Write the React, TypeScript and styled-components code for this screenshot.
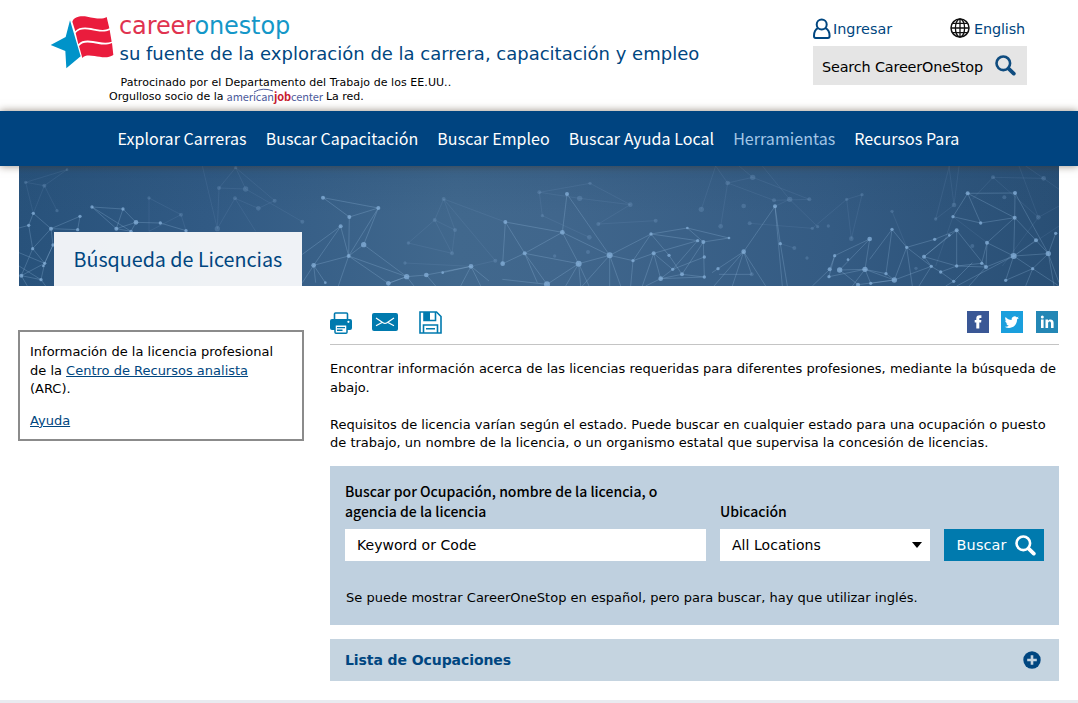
import React from 'react';
import styled, { createGlobalStyle } from 'styled-components';

const verdana = `Verdana, "DejaVu Sans", sans-serif`;
const sourceSans = `"Source Sans Pro", "Noto Sans CJK SC", sans-serif`;

const GlobalStyle = createGlobalStyle`
  * { box-sizing: border-box; }
  body { margin: 0; background: #fff; color: #000; font-family: ${verdana}; overflow: hidden; }
  p { margin: 0; }
`;

const Page = styled.div`height: 703px; overflow: hidden; display: flex; flex-direction: column;`;

const Header = styled.header`
  height: 111px; display: flex; justify-content: space-between; padding: 14px 51px 0 50px;
  flex: none;
`;
const BrandRow = styled.div`display: flex; gap: 5px; height: 60px;`;
const BrandText = styled.div`display: flex; flex-direction: column; white-space: nowrap;`;
const Wordmark = styled.div`
  font-size: 24px; line-height: 24px; color: #1497c8; letter-spacing: -.12px; margin-left: -1px;
  em { font-style: normal; color: #e0334f; }
`;
const Tagline = styled.div`font-size: 18px; line-height: 31px; color: #004680; margin-left: -.5px;`;
const Sponsor = styled.div`
  font-size: 11px; line-height: 15px; padding-left: 59px; white-space: nowrap;
`;
const SponsorLine = styled.div<{ $first?: boolean }>`
  display: flex; gap: 3px;
  ${p => p.$first && 'padding: 1px 0 0 11.5px; height: 15px; letter-spacing: .06px;'}
`;
const JobCenter = styled.span`
  position: relative; font-family: ${sourceSans}; font-size: 11px; color: #4d5b9c; letter-spacing: -.1px;
  b { color: #c8202f; }
  svg { position: absolute; left: 26px; top: -1px; }
`;
const Tools = styled.div`width: 214px; margin-top: 4px;`;
const ToolLinks = styled.div`display: flex; justify-content: space-between; height: 28px; padding-right: 2px;`;
const ToolLink = styled.a<{ $gap: number; $spacing?: number }>`
  display: flex; gap: ${p => p.$gap}px; font-size: 14.4px; line-height: 22px; color: #004680;
  letter-spacing: ${p => p.$spacing ?? 0}px;
`;
const SiteSearch = styled.div`
  height: 39px; background: #e5e5e5; display: flex; align-items: center; justify-content: space-between;
  padding: 0 11px 0 9px; font-size: 14.4px; letter-spacing: -.16px; white-space: nowrap;
  span { padding-top: 2px; }
`;

const Nav = styled.nav`
  height: 55px; flex: none; background: #004480; display: flex; gap: 19px; padding-left: 117.5px; position: relative; z-index: 1;
  box-shadow: 0 0 8px rgba(60, 40, 20, .55);
`;
const NavLink = styled.a<{ $muted?: boolean }>`
  font-family: ${sourceSans}; font-size: 16px; line-height: 55px; letter-spacing: .055px; white-space: nowrap;
  color: ${p => (p.$muted ? '#a3c6e6' : '#fff')};
`;

const Banner = styled.div`
  height: 120px; flex: none; margin: 0 19px; display: grid; align-items: end; padding-left: 35px; position: relative;
  background: linear-gradient(180deg, rgba(38,78,116,.25), rgba(38,78,116,0) 40%),
    linear-gradient(90deg, #28527b 0%, #315a84 18%, #41688d 42%, #40668c 52%, #345b83 78%, #294f75 100%);
`;
const Network = styled.svg`position: absolute; inset: 0; width: 1040px; height: 120px;`;
const PageTitle = styled.h1`
  position: relative; margin: 0; width: 248px; height: 54px; background: rgba(255,255,255,.92); color: #004680;
  font-family: ${sourceSans}; font-weight: 400; font-size: 19.7px; line-height: 54px; padding-left: 19.5px; white-space: nowrap;
`;

const Columns = styled.div`display: flex; align-items: flex-start; padding: 0 19px 0 18px;`;
const Aside = styled.aside`
  width: 286px; height: 111px; margin: 44px 26px 0 0; border: 2px solid #8b8b8b; padding: 11px 10px;
  font-size: 13px; line-height: 18.5px; white-space: nowrap;
  p + p { margin-top: 13px; }
  a { color: #004680; text-decoration: underline; }
`;
const Main = styled.main`width: 729px; font-size: 13px; line-height: 18.4px; white-space: nowrap;`;
const ActionBar = styled.div`
  height: 59px; border-bottom: 1px solid #c4c4c4; display: flex; align-items: center; padding-top: 14px;
`;
const Actions = styled.div`
  display: flex; align-items: center; gap: 20px; flex: 1;
  svg:first-child { margin-top: 2px; }
  svg:last-child { margin-left: 1px; }
`;
const Social = styled.div`
  display: flex; gap: 13px; padding-right: 1px;
  svg:first-child { margin-right: -1px; }
`;
const Paragraph = styled.p`
  margin-top: 14px; line-height: 19px;
  & + & { margin-top: 19px; line-height: 18px; }
`;
const SearchPanel = styled.section`margin-top: 14px; height: 159px; background: #bfd0df; padding: 15px;`;
const Fields = styled.div`display: flex; gap: 14px; align-items: flex-end;`;
const Field = styled.div<{ $width: number }>`width: ${p => p.$width}px;`;
const Label = styled.div`font-family: ${sourceSans}; font-weight: 500; font-size: 14px; line-height: 20px; padding-bottom: 8px;`;
const Input = styled.div`
  height: 32px; background: #fff; padding: 0 8px 0 12px; display: flex; align-items: center; justify-content: space-between;
  font-size: 14px; letter-spacing: .04px;
`;
const SearchButton = styled.button`
  width: 100px; height: 32px; border: 0; background: #007aae; color: #fff; font-family: ${verdana}; font-size: 14.4px;
  display: flex; align-items: center; justify-content: space-between; padding: 0 8px 0 12.6px; letter-spacing: .15px;
`;
const Note = styled.p`margin-top: 28px; padding-left: 1px; letter-spacing: .015px;`;
const Accordion = styled.section`
  margin-top: 14px; height: 42px; background: #c5d4e0; display: flex; align-items: center; justify-content: space-between;
  padding: 0 18px 0 15px; color: #004680; font-size: 14px; font-weight: 700; letter-spacing: -.08px;
`;
const FooterEdge = styled.div`height: 3px; margin-top: auto; background: #e9ebf0; flex: none;`;

const nodes: [number, number, number][] = [
  [43,142,5],[29,178,5],[96,188,6],[183,151,5],[176,191,5],[102,237,5],[77,292,5],[73,300,4],[41,248,5],[7,329,6],[66,341,5],
  [219,123,5],[312,129,5],[351,169,7],[292,188,6],[424,171,5],[501,194,5],[336,196,5],
  [912,95,6],[991,153,6],[965,181,6],[1034,236,8],[989,270,6],[884,298,7],[919,350,4],[1078,126,6],[1163,332,8],[1108,352,7],
  [1222,327,7],[1356,301,7],[1271,320,4],[1451,293,7],[1459,168,6],[1517,262,6],[1630,199,7],[1644,84,6],[1679,293,9],[1772,268,9],
  [1584,355,9],[1842,284,5],[1896,204,5],[1904,262,6],[1950,268,5],[2005,186,4],[2036,224,5],[2053,228,6],[2056,273,5],[2056,333,5],
  [1925,338,7],[1989,325,6],[1961,310,5],[2130,216,4],[2097,308,5],[2174,257,7],[2268,121,6],[2284,233,5],[2447,269,5],[2487,281,4],
  [2432,310,6],[2462,312,8],[2430,332,5],[2538,310,8],[2552,219,7],[2619,190,5],[2663,244,5],[2626,342,8],[2601,323,5],[2517,356,6],
  [2555,352,5],[2715,272,6],[2737,301,5],[2747,220,5],[2813,193,6],[2791,208,4],[2813,300,5],[2765,318,5],[2804,346,5],
  [2846,82,6],[2988,81,6],[2802,152,5],[2885,171,5],[2987,155,6],[2904,230,6],[2888,292,5],[2901,303,6],[2984,270,9],[3051,223,6],
  [3088,263,8],[3110,202,5],[3041,308,5],[2960,343,5],
];
const faintNodes: [number, number, number][] = [
  [20,49,5],[76,59,6],[144,11,4],[114,134,5],[390,96,5],[486,146,6],[600,66,6],[680,69,8],[650,5,5],[648,97,6],[767,104,6],[718,127,7],
  [850,167,6],[595,188,8],[1274,99,6],[1247,162,6],[1308,192,6],[1168,231,5],[1299,262,6],[1158,291,5],[1429,284,6],
  [1561,79,6],[1570,149,5],[1682,97,8],[1713,52,5],[1834,116,7],[1738,174,6],[1910,164,6],[1711,214,7],[1707,258,6],[1607,270,5],
  [2047,130,8],[2126,51,7],[2201,34,8],[2105,181,7],[2174,120,7],[2192,172,6],[2265,103,6],[2312,100,8],[2371,100,6],[2380,187,5],
  [2396,182,5],[2428,180,5],[2483,100,5],[2529,86,5],[2497,218,7],[2326,246,6],[2364,276,5],[2198,325,6],[2619,136,5],[2750,159,5],
  [2805,117,7],[2922,34,6],[2956,94,6],[3074,37,7],[3058,154,7],[2691,307,5],[2860,240,6],
];
const lines = [
  'M43 142L29 178M43 142L96 188L183 151L176 191L96 188M96 188L102 237L77 292L7 329M29 178L41 248L77 292L66 341L7 329M73 300L102 237M0 186L29 178M0 260L77 292M7 329L41 248M0 300L66 341L80 360M96 188L41 248M7 329L25 360',
  'M219 123L312 129L351 169L424 171L501 194M219 123L292 188L312 129M292 188L351 169M219 123L336 196L351 169M292 188L336 196',
  'M912 95L991 153L1078 126ZM991 153L989 270L965 181L884 298L850 350M989 270L1034 236L1078 126L989 270L884 298L919 350M850 265L965 181M989 270L1163 332M1034 236L1163 332L1108 352L989 270L958 360M884 298L890 350M1163 332L1185 360M1108 352L1163 332L1222 327L1356 301M1271 320L1356 301L1385 360M1356 301L1325 360M1356 301L1410 345M1222 327L1250 360',
  'M1451 293L1459 168L1517 262ZM1459 168L1630 199L1517 262L1679 293L1630 199L1644 84L1772 268L1630 199M1679 293L1584 355L1450 340M1584 355L1517 262L1555 350M1679 293L1772 268L1772 360M1679 293L1640 360M1679 293L1685 360M1679 293L1710 360M1772 268L1690 360M1772 268L1805 360M1772 268L1896 204',
  'M1842 284L1896 204L2036 224L1904 262L1842 284L1772 268M1896 204L2005 186L2053 228L2056 333L1925 338L1961 310L2056 273M1904 262L1961 310L2036 224M1904 262L1870 360M1904 262L1925 338M1842 284L1835 360M1896 204L1950 268L1989 325M1925 338L1880 360M1925 338L1989 325L2056 333M2005 186L2130 216M2053 228L2130 216M2053 228L1989 325',
  'M2174 257L2268 121L2284 233L2305 360M2174 257L2079 320M2174 257L2085 360M2174 257L2198 325M2174 257L2240 360M2174 257L2140 360M2268 121L2290 360M2100 325L2198 325',
  'M2447 269L2552 219L2538 310L2601 323L2626 342L2737 301M2447 269L2430 332M2447 269L2432 310L2380 360M2462 312L2552 219M2462 312L2538 310L2430 332M2538 310L2626 342L2517 356M2619 190L2663 244L2747 220L2813 193L2715 272M2619 190L2552 280M2619 190L2601 323M2663 244L2626 342L2555 352L2538 310M2663 244L2737 301L2715 272L2791 208M2715 272L2813 300L2901 303M2813 193L2813 300L2765 318L2737 301L2700 360M2765 318L2804 346L2780 360M2804 346L2860 290M2462 312L2517 356M2538 310L2500 360M2663 244L2680 360M2813 193L2901 303',
  'M2846 82L2988 81L2987 155L2846 82L2802 152L2885 171L2846 82M2885 171L2987 155L2984 270L3051 223L2987 155L2904 230L2901 303M2988 81L3088 263L3051 223M3088 263L3110 202M3088 263L3041 308L2984 270L2904 230M3088 263L2984 270L2901 303L2888 292L2904 230M3088 263L3120 350M3088 263L3105 360M3041 308L3120 360M2984 270L2960 343M3041 308L2960 343M2984 270L2813 360M3041 308L3020 360M2901 303L2850 360M2813 300L2888 292',
];
const faintLines =
  'M20 49L144 11L76 59ZM20 49L43 142M76 59L114 134M76 59L43 142M390 96L486 146L501 194M390 96L390 196L486 146M600 66L680 69L650 5ZM550 0L595 188L600 66M650 5L767 104M648 97L718 127M680 69L850 167M648 97L595 188M648 97L710 196M718 127L767 104' +
  'M1274 99L1459 168M1274 99L1247 162L1168 231L1299 262L1247 162L1308 192L1299 262M1274 99L1308 192M1274 99L1429 284M1158 291L1356 301M1356 301L1429 284M1561 79L1570 149M1561 79L1713 52L1834 116L1682 97ZM1834 116L1738 174L1910 164M1570 149L1711 214M2047 130L2090 0M2126 51L2201 34L2371 100L2265 103ZM2126 51L2105 181M2126 51L2090 0M2201 34L2160 0M2192 172L2380 187L2483 100L2529 86M2268 121L2312 100L2396 182M2312 100L2230 0M2483 100L2497 218M2529 86L2497 218M2326 246L2284 233M2619 136L2663 244M2750 159L2805 117L2790 0M2750 159L2791 0M2805 117L2820 0M2922 34L3074 37L3120 70M2922 34L2860 100M3074 37L3020 0M3058 154L3120 120M3058 154L3000 0M2922 34L3058 154M2802 152L2904 230M3058 154L2950 300M2802 152L2750 300M3120 180L2984 270';

const NetworkArt = () => (
  <Network viewBox="0 0 3120 360" preserveAspectRatio="none" fill="none">
    <path d={faintLines} stroke="#8ab0d6" strokeOpacity=".12" strokeWidth="3" />
    {lines.map(d => <path key={d} d={d} stroke="#9cc0e4" strokeOpacity=".26" strokeWidth="3" />)}
    {faintNodes.map(([x, y, r]) => <circle key={`${x}-${y}`} cx={x} cy={y} r={r} fill="#7fa6cd" fillOpacity=".28" />)}
    {nodes.map(([x, y, r]) => <circle key={`${x}-${y}`} cx={x} cy={y} r={r} fill="#86b0da" fillOpacity=".75" />)}
  </Network>
);

const StarFlag = () => (
  <svg width="65" height="55" viewBox="30 45 195 165">
    <path fill="#0093c9" d="M90 64L77 114L32 138L76 156L79 208L122 172Z" />
    <g fill="#ea1c3d">
      <path d="M97 68C103 52 122 50 142 53C165 57 185 63 200 54L208 88C192 97 172 91 153 87C134 84 116 84 106 97Z" />
      <path d="M107 102C117 89 136 90 153 93C172 97 194 101 209 93L215 128C197 135 177 129 159 126C141 123 124 124 115 136Z" />
      <path d="M117 141C126 129 142 129 159 132C178 136 198 140 216 132L220 168C203 179 183 174 164 171C148 169 134 168 127 177Z" />
    </g>
  </svg>
);

const UserIcon = () => (
  <svg width="18" height="22" viewBox="0 0 18 22" fill="none" stroke="#004680" strokeWidth="2">
    <circle cx="8.7" cy="6.4" r="5" />
    <path d="M5.1 10.2C2.2 11.4 1 14 1 18Q1 20 2.6 20H14.8Q16.6 20 16.6 18C16.6 14 15.2 11.4 12.3 10.2" />
  </svg>
);
const GlobeIcon = () => (
  <svg width="20" height="20" viewBox="0 0 20 20" fill="none" stroke="#111" strokeWidth="1.3">
    <circle cx="10" cy="10" r="9" strokeWidth="1.5" />
    <ellipse cx="10" cy="10" rx="4.6" ry="9" />
    <path d="M10 1V19M1 10H19M2.6 5.4H17.4M2.6 14.6H17.4" />
  </svg>
);
const Magnifier = ({ color }: { color: string }) => (
  <svg width="21" height="21" viewBox="0 0 21 21" fill="none" stroke={color} strokeLinecap="round">
    <circle cx="8.3" cy="8.3" r="6.8" strokeWidth="2.6" />
    <path d="M13.6 13.6L18.8 18.6" strokeWidth="3.8" />
  </svg>
);
const PrinterIcon = () => (
  <svg width="22" height="22" viewBox="0 0 22 22">
    <path d="M4.5 8V2Q4.5 1 5.5 1H16.5Q17.5 1 17.5 2V8" fill="#fff" stroke="#007aae" strokeWidth="1.6" />
    <path d="M2 7H20Q22 7 22 9V16Q22 18 20 18H2Q0 18 0 16V9Q0 7 2 7Z" fill="#007aae" />
    <circle cx="18.4" cy="9.8" r="1.1" fill="#fff" />
    <path d="M5 12.8H17V20.2Q17 21.2 16 21.2H6Q5 21.2 5 20.2Z" fill="#fff" stroke="#007aae" strokeWidth="1.5" />
    <path d="M7 15.6H15M7 18.2H12.5" stroke="#007aae" strokeWidth="1.4" />
  </svg>
);
const MailIcon = () => (
  <svg width="26" height="18" viewBox="0 0 26 18" fill="none" stroke="#fff">
    <rect width="26" height="18" rx="2" fill="#007aae" stroke="none" />
    <path d="M4 5L11 9.7Q13 11 15 9.7L22 5M4 12.7L10 9.5M22 12.7L16 9.5" strokeWidth="1.2" />
  </svg>
);
const SaveIcon = () => (
  <svg width="23" height="23" viewBox="0 0 23 23" fill="none" stroke="#007aae" strokeWidth="1.6">
    <path d="M1 1H17.5L22 5.5V22H1Z" />
    <path d="M5 1V9.5H16.5V1M4.5 22V14H18.5V22M7 17.8H16" />
    <path d="M5 1H11V9H5Z" fill="#007aae" stroke="none" />
  </svg>
);
const FacebookIcon = () => (
  <svg width="22" height="22" viewBox="0 0 22 22">
    <rect width="22" height="22" fill="#3a5795" />
    <path fill="#fff" d="M9.3 17.5V11.6H7.7V9H9.3V7.5C9.3 5.4 10.4 4.3 12.5 4.3H14.4V6.9H13.2C12.5 6.9 12.3 7.2 12.3 7.8V9H14.4L14.1 11.6H12.3V17.5Z" />
  </svg>
);
const TwitterIcon = () => (
  <svg width="22" height="22" viewBox="0 0 22 22">
    <rect width="22" height="22" fill="#1a9fdd" />
    <path fill="#fff" d="M18 6.7c-.5.25-1.1.4-1.7.48.6-.36 1.08-.94 1.3-1.62-.57.34-1.2.58-1.87.71a2.95 2.95 0 0 0-5.03 2.69C8.25 8.83 6.08 7.66 4.62 5.88c-.8 1.36-.4 3.11.91 3.94-.48-.02-.94-.15-1.33-.37v.04c0 1.41.98 2.62 2.37 2.9-.43.11-.89.13-1.33.05.37 1.17 1.46 2.02 2.75 2.05A5.92 5.92 0 0 1 3.63 15.7c5.4 3.45 12.4-.3 12.4-6.88l-.01-.38c.58-.42 1.55-1.15 1.98-1.74Z" />
  </svg>
);
const LinkedInIcon = () => (
  <svg width="22" height="22" viewBox="0 0 22 22">
    <rect width="22" height="22" fill="#2487b5" />
    <g fill="#fff">
      <circle cx="6.3" cy="6" r="1.5" />
      <path d="M5 8.5H7.6V17H5ZM9.5 8.5H12V9.7C13.4 7.6 17.6 7.9 17.6 11.7V17H15V12.3C15 9.9 12.1 10 12.1 12.3V17H9.5Z" />
    </g>
  </svg>
);
const PlusIcon = () => (
  <svg width="18" height="18" viewBox="0 0 18 18">
    <circle cx="9" cy="9" r="8.7" fill="#004680" />
    <path d="M9 4.2V13.8M4.2 9H13.8" stroke="#c5d4e0" strokeWidth="2.6" />
  </svg>
);

export default function App() {
  return (
    <Page>
      <GlobalStyle />
      <Header>
        <div>
          <BrandRow>
            <StarFlag />
            <BrandText>
              <Wordmark><em>career</em>onestop</Wordmark>
              <Tagline>su fuente de la exploración de la carrera, capacitación y empleo</Tagline>
            </BrandText>
          </BrandRow>
          <Sponsor>
            <SponsorLine $first>Patrocinado por el Departamento del Trabajo de los EE.UU..</SponsorLine>
            <SponsorLine>
              <span>Orgulloso socio de la</span>
              <JobCenter>american<b>job</b>center
                <svg width="22" height="6" viewBox="0 0 22 6" fill="none" stroke="#4d5b9c"><path d="M1 4Q10 -1 20 3" /></svg>
              </JobCenter>
              <span>La red.</span>
            </SponsorLine>
          </Sponsor>
        </div>
        <Tools>
          <ToolLinks>
            <ToolLink $gap={2}><UserIcon />Ingresar</ToolLink>
            <ToolLink $gap={4} $spacing={-0.15}><GlobeIcon />English</ToolLink>
          </ToolLinks>
          <SiteSearch><span>Search CareerOneStop</span><Magnifier color="#0f4c7f" /></SiteSearch>
        </Tools>
      </Header>
      <Nav>
        <NavLink>Explorar Carreras</NavLink>
        <NavLink>Buscar Capacitación</NavLink>
        <NavLink>Buscar Empleo</NavLink>
        <NavLink>Buscar Ayuda Local</NavLink>
        <NavLink $muted>Herramientas</NavLink>
        <NavLink>Recursos Para</NavLink>
      </Nav>
      <Banner>
        <NetworkArt />
        <PageTitle>Búsqueda de Licencias</PageTitle>
      </Banner>
      <Columns>
        <Aside>
          <p>Información de la licencia profesional<br />de la <a>Centro de Recursos analista</a><br />(ARC).</p>
          <p><a>Ayuda</a></p>
        </Aside>
        <Main>
          <ActionBar>
            <Actions><PrinterIcon /><MailIcon /><SaveIcon /></Actions>
            <Social><FacebookIcon /><TwitterIcon /><LinkedInIcon /></Social>
          </ActionBar>
          <Paragraph>Encontrar información acerca de las licencias requeridas para diferentes profesiones, mediante la búsqueda de<br />abajo.</Paragraph>
          <Paragraph>Requisitos de licencia varían según el estado. Puede buscar en cualquier estado para una ocupación o puesto<br />de trabajo, un nombre de la licencia, o un organismo estatal que supervisa la concesión de licencias.</Paragraph>
          <SearchPanel>
            <Fields>
              <Field $width={361}>
                <Label>Buscar por Ocupación, nombre de la licencia, o<br />agencia de la licencia</Label>
                <Input>Keyword or Code</Input>
              </Field>
              <Field $width={210}>
                <Label>Ubicación</Label>
                <Input>All Locations<svg width="10" height="6" viewBox="0 0 10 6"><path d="M0 0H10L5 6Z" /></svg></Input>
              </Field>
              <SearchButton>Buscar<Magnifier color="#fff" /></SearchButton>
            </Fields>
            <Note>Se puede mostrar CareerOneStop en español, pero para buscar, hay que utilizar inglés.</Note>
          </SearchPanel>
          <Accordion>Lista de Ocupaciones<PlusIcon /></Accordion>
        </Main>
      </Columns>
      <FooterEdge />
    </Page>
  );
}
